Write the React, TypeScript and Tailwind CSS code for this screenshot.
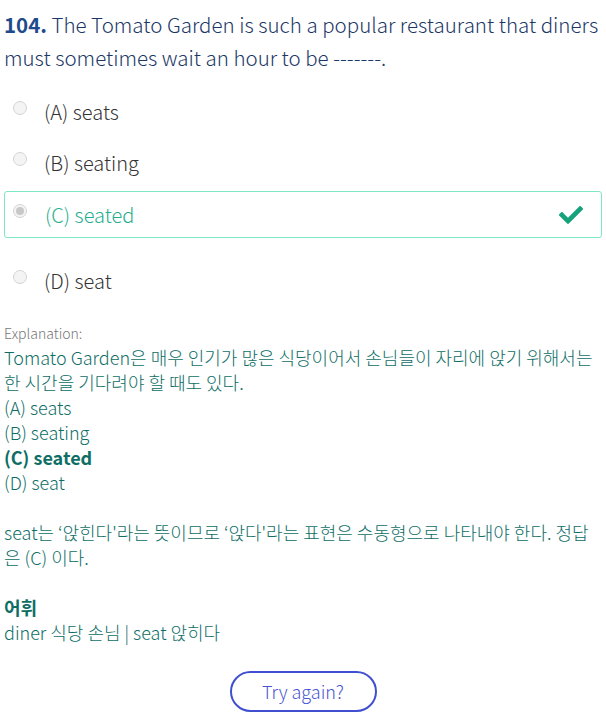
import { FaCheck } from 'react-icons/fa';

const options = [
  { key: 'A', text: 'seats' },
  { key: 'B', text: 'seating' },
  { key: 'C', text: 'seated', correct: true },
  { key: 'D', text: 'seat' },
];

const Radio = ({ checked }: { checked?: boolean }) => (
  <span className="w-[14px] h-[14px] rounded-full border border-[#d4d4d4] bg-[#f4f4f4] flex items-center justify-center shrink-0">
    {checked && <span className="w-[8px] h-[8px] rounded-full bg-[#c8c8c8]" />}
  </span>
);

const App = () => {
  return (
    <div
      className="w-[606px] bg-white px-[4px] pt-[8px] font-light"
      style={{ fontFamily: '"Noto Sans CJK KR", "Noto Sans", sans-serif' }}
    >
      <p className="text-[20.5px] leading-[33px] text-[#1a3766]">
        <span className="font-bold text-[#1f4b8c]">104.</span> The Tomato Garden is such a popular restaurant that
        diners must sometimes wait an hour to be -------.
      </p>

      <div className="flex flex-col mt-[12px]">
        {options.map(o =>
          o.correct ? (
            <div
              key={o.key}
              className="h-[47px] mt-[3px] mb-[17px] border border-[#7ee8c6] rounded-[3px] flex items-center pl-[8px] pr-[18px]"
            >
              <div className="mt-[-8px]">
                <Radio checked />
              </div>
              <span className="ml-[18px] text-[20px] text-[#1fae8f] flex-1">
                ({o.key}) {o.text}
              </span>
              <FaCheck className="text-[#16a27b] w-[24px] h-[24px]" />
            </div>
          ) : (
            <div key={o.key} className="h-[45px] flex items-center pl-[9px] my-[3px]">
              <div className="mt-[-8px]">
                <Radio />
              </div>
              <span className="ml-[17px] text-[20px] text-[#333333]">
                ({o.key}) {o.text}
              </span>
            </div>
          )
        )}
      </div>

      <div className="mt-[17px] text-[18px] leading-[25px] text-[#0e6e66]">
        <div className="text-[14px] leading-[20px] text-[#777777]">Explanation:</div>
        <p className="mt-[2px]">Tomato Garden은 매우 인기가 많은 식당이어서 손님들이 자리에 앉기 위해서는 한 시간을 기다려야 할 때도 있다.</p>
        <p>(A) seats</p>
        <p>(B) seating</p>
        <p className="font-semibold">(C) seated</p>
        <p>(D) seat</p>
        <p className="mt-[25px]">seat는 ‘앉힌다'라는 뜻이므로 ‘앉다'라는 표현은 수동형으로 나타내야 한다. 정답은 (C) 이다.</p>
        <p className="mt-[25px] font-semibold">어휘</p>
        <p>diner 식당 손님 | seat 앉히다</p>
      </div>

      <div className="flex justify-center mt-[26px] pb-[10px]">
        <button className="w-[147px] h-[41px] rounded-full border-2 border-[#3f4fd0] text-[18px] text-[#4a55d4] bg-white">
          Try again?
        </button>
      </div>
    </div>
  );
};

export default App;
